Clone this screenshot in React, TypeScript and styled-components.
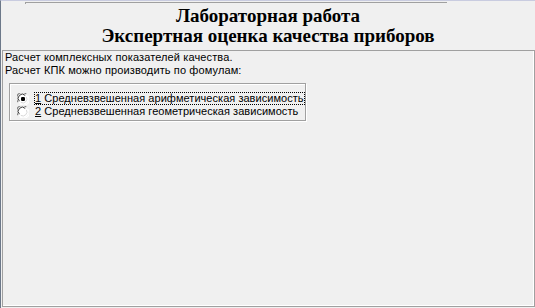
import React, { useState } from "react";
import styled, { createGlobalStyle } from "styled-components";

const GlobalStyle = createGlobalStyle`
  html, body {
    margin: 0;
    padding: 0;
    background: #f0f0f0;
  }
  body {
    width: 535px;
    height: 308px;
    overflow: hidden;
  }
`;

const Window = styled.div`
  box-sizing: border-box;
  width: 535px;
  height: 308px;
  background: #f0f0f0;
  border-left: 1px solid #6c7889;
  border-top: 1px solid #c9cce0;
  display: flex;
  flex-direction: column;
`;

const Header = styled.header`
  height: 49px;
  display: flex;
  flex-direction: column;
`;

const TopRule = styled.div`
  margin: 1px 0 0 24px;
  width: 421px;
  height: 1px;
  border-top: 1px solid #a0a0a0;
  border-left: 1px solid #a0a0a0;
`;

const Title = styled.h1`
  margin: 2px 0 0 0;
  font-family: "Liberation Serif", "Times New Roman", serif;
  font-weight: bold;
  font-size: 19px;
  line-height: 20px;
  text-align: center;
  color: #000;
`;

const MainBox = styled.section`
  box-sizing: border-box;
  margin-left: 1px;
  width: 533px;
  height: 257px;
  border: 1px solid #a0a0a0;
  box-shadow: inset -1px -1px 0 #fff;
  padding: 0 0 0 2px;
  font-family: "Liberation Sans", Arial, sans-serif;
  font-size: 11px;
  letter-spacing: 0.12px;
  line-height: 13px;
  color: #000;
`;

const Line = styled.div`
  white-space: nowrap;
`;

const GroupBox = styled.div`
  box-sizing: border-box;
  margin: 6px 0 0 4px;
  width: 297px;
  height: 38px;
  border: 1px solid #a0a0a0;
  box-shadow: inset 1px 1px 0 #fff, 1px 1px 0 #fff;
  padding: 8px 0 0 7px;
  display: flex;
  flex-direction: column;
`;

const RadioRow = styled.label`
  display: flex;
  align-items: center;
  height: 13px;
  cursor: default;
`;

const Caption = styled.span<{ $focused?: boolean }>`
  display: inline-block;
  box-sizing: border-box;
  margin-left: 5px;
  padding: 0 1px;
  height: 13px;
  line-height: 12px;
  letter-spacing: 0.04px;
  white-space: pre;
  outline: ${(p) => (p.$focused ? "1px dotted #000" : "none")};
  outline-offset: -1px;
`;

const RadioMark = ({ checked }: { checked: boolean }) => (
  <svg width="12" height="12" viewBox="0 0 12 12">
    <circle cx="6" cy="6" r="5.5" fill="#fff" />
    <path d="M1.2 9.2 A5.3 5.3 0 0 1 9.2 1.2" stroke="#7a7a7a" fill="none" strokeWidth="1.1" />
    <path d="M2.4 8.2 A4.1 4.1 0 0 1 8.2 2.4" stroke="#3a3a3a" fill="none" strokeWidth="1" />
    <path d="M10.6 2.8 A5.3 5.3 0 0 1 2.8 10.6" stroke="#fff" fill="none" strokeWidth="1.1" />
    <path d="M9.4 3.8 A4.1 4.1 0 0 1 3.8 9.4" stroke="#d8d8d8" fill="none" strokeWidth="1" />
    {checked && <rect x="4" y="4" width="4" height="4" rx="1.2" fill="#000" />}
  </svg>
);

const options = [
  { key: "1", rest: " Средневзвешенная арифметическая зависимость" },
  { key: "2", rest: " Средневзвешенная геометрическая зависимость" },
];

export default function App() {
  const [selected, setSelected] = useState(0);
  return (
    <>
      <GlobalStyle />
      <Window>
        <Header>
          <TopRule />
          <Title>
            Лабораторная работа
            <br />
            Экспертная оценка качества приборов
          </Title>
        </Header>
        <MainBox>
          <Line>Расчет комплексных показателей качества.</Line>
          <Line>Расчет КПК можно производить по фомулам:</Line>
          <GroupBox>
            {options.map((o, i) => (
              <RadioRow key={o.key} onClick={() => setSelected(i)}>
                <RadioMark checked={selected === i} />
                <Caption $focused={selected === i}>
                  <u>{o.key}</u>
                  {o.rest}
                </Caption>
              </RadioRow>
            ))}
          </GroupBox>
        </MainBox>
      </Window>
    </>
  );
}
